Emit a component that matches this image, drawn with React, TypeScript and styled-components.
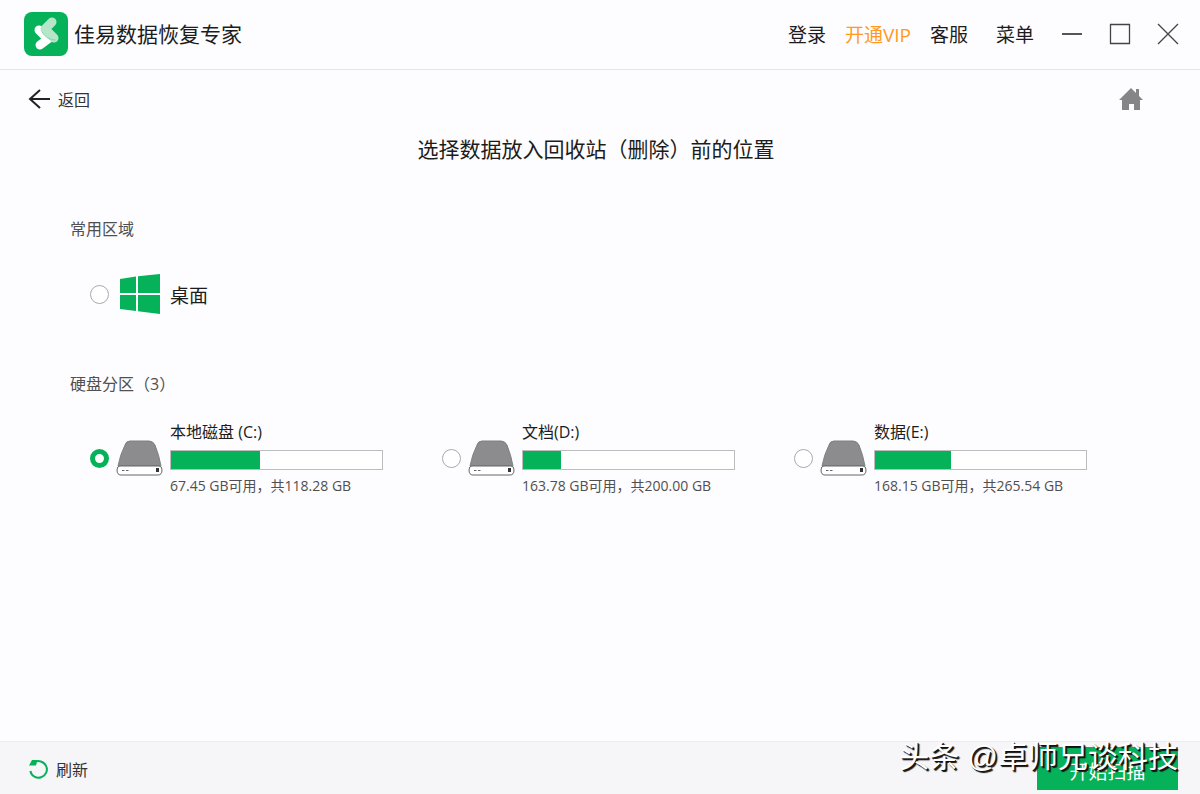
import React, { useState } from 'react';
import styled, { createGlobalStyle } from 'styled-components';

const GREEN = '#05b259';

const GlobalStyle = createGlobalStyle`
  *, *::before, *::after { box-sizing: border-box; }
  body {
    margin: 0;
    background: #fdfcfe;
    color: #1c1c1c;
    font-family: "Open Sans", "Noto Sans CJK SC", sans-serif;
    font-size: 16px;
    font-weight: 400;
  }
  button, input { font: inherit; color: inherit; margin: 0; }
`;

const Window = styled.div`
  min-height: 100vh;
  display: flex;
  flex-direction: column;
`;

const TitleBar = styled.header`
  display: flex;
  align-items: center;
  justify-content: space-between;
  height: 70px;
  padding: 0 20px 2px 24px;
  border-bottom: 1px solid #e6e5e8;
`;

const Brand = styled.div`
  display: flex;
  align-items: center;
  gap: 6px;
  font-size: 21px;
  line-height: 30px;
`;

const Menu = styled.nav`
  display: flex;
  align-items: center;
`;

const MenuLinks = styled.div`
  display: flex;
  gap: 19px;
  padding-top: 3px;
`;

const MenuLink = styled.a<{ $vip?: boolean; $spaced?: boolean }>`
  color: ${p => (p.$vip ? '#ff9a1f' : '#1c1c1c')};
  margin-left: ${p => (p.$spaced ? 9 : 0)}px;
  font-size: 19px;
  line-height: 28px;
  text-decoration: none;
`;

const WindowControls = styled.div`
  display: flex;
  gap: 24px;
  margin-left: 26px;
`;

const IconButton = styled.button`
  display: flex;
  align-items: center;
  justify-content: center;
  width: 24px;
  height: 24px;
  padding: 0;
  border: 0;
  background: none;
`;

const SubBar = styled.div`
  display: flex;
  align-items: center;
  justify-content: space-between;
  padding: 16px 57px 0 28px;
`;

const TextButton = styled.button`
  display: flex;
  align-items: center;
  gap: 7px;
  padding: 2px 0 0;
  border: 0;
  background: none;
  color: #333;
  line-height: 24px;
`;

const Main = styled.main`
  flex: 1;
`;

const Heading = styled.h1`
  margin: 21px 8px 0 0;
  font-size: 21px;
  font-weight: 400;
  line-height: 32px;
  text-align: center;
`;

const Section = styled.fieldset`
  margin: 0;
  padding: 52px 54px 0 70px;
  border: 0;
  min-width: 0;
`;

const SectionTitle = styled.h2`
  margin: 0;
  color: #505050;
  font-size: 16px;
  font-weight: 400;
  line-height: 24px;
`;

const Places = styled.div`
  display: flex;
  padding: 33px 0 6px 20px;
`;

const Disks = styled.div`
  display: grid;
  grid-template-columns: repeat(3, 1fr);
  padding: 24px 0 24px 20px;
`;

const Choice = styled.label`
  display: flex;
  align-items: center;
`;

const Radio = styled.input`
  appearance: none;
  flex: none;
  width: 19px;
  height: 19px;
  border: 1px solid #a9a9ab;
  border-radius: 50%;
  background: #fff;
  &:checked { border: 5px solid ${GREEN}; }
`;

const PlaceIcon = styled.span`
  display: flex;
  margin: 0 10px 0 11px;
`;

const PlaceName = styled.span`
  padding-top: 3px;
  font-size: 19px;
  line-height: 28px;
`;

const DiskIcon = styled.span`
  display: flex;
  flex: none;
  margin: 0 7px;
`;

const DiskInfo = styled.span`
  display: flex;
  flex-direction: column;
  width: 213px;
`;

const DiskName = styled.span`
  font-size: 16px;
  line-height: 24px;
`;

const Usage = styled.span`
  display: block;
  height: 20px;
  margin: 6px 0;
  border: 1px solid #bdbdc0;
  background: #fff;
`;

const UsageFill = styled.span`
  display: block;
  height: 100%;
  background: ${GREEN};
`;

const DiskStats = styled.span`
  color: #505050;
  font-size: 14px;
  line-height: 20px;
  white-space: nowrap;
`;

const BottomBar = styled.footer`
  position: relative;
  display: flex;
  align-items: center;
  justify-content: space-between;
  height: 53px;
  padding: 5px 22px 4px 28px;
  border-top: 1px solid #ececef;
  background: #f6f5f8;
`;

const ScanButton = styled.button`
  width: 141px;
  height: 43px;
  padding: 6px 0 0;
  border: 0;
  background: ${GREEN};
  color: #fff;
  font-size: 19px;
  line-height: 28px;
`;

const Watermark = styled.span`
  position: absolute;
  right: 22px;
  bottom: 17px;
  color: #fff;
  font-family: "Liberation Sans", "Noto Sans CJK SC", sans-serif;
  font-size: 30px;
  line-height: 40px;
  text-shadow: 2px 2px 1px #111, 1px 1px 0 #222;
  white-space: nowrap;
  pointer-events: none;
`;

const Logo = () => (
  <svg width="44" height="44" viewBox="0 0 44 44" fill="none" strokeLinecap="round" strokeLinejoin="round" aria-hidden="true">
    <rect width="44" height="44" rx="8" fill={GREEN} />
    <path d="M15 18L24 27L16 33" stroke="#fff" strokeWidth="9" />
    <path d="M28 10L21 17L30 26" stroke="#b5e6ca" strokeWidth="9" />
    <path d="M18 20Q23 28 31 28" stroke="#85d5a8" strokeWidth="1" />
  </svg>
);

const BackArrow = () => (
  <svg width="23" height="22" viewBox="0 0 23 22" fill="none" stroke="#222" strokeWidth="2" aria-hidden="true">
    <path d="M22 10H3M12 1L2 10l10 9" />
  </svg>
);

const HomeIcon = () => (
  <svg width="24" height="22" viewBox="0 0 24 22" fill="#858585" aria-hidden="true">
    <path d="M12 0L17 5V1h3v7l4 4h-3v10h-6v-6h-5v6H3V12H0z" />
  </svg>
);

const WindowsIcon = () => (
  <svg width="40" height="40" viewBox="0 0 40 40" fill={GREEN} aria-hidden="true">
    <path d="M0 5L16 2.5V19H0zM18 2.2L40 0V19H18zM0 21H16V37L0 35zM18 21H40V40L18 37.3z" />
  </svg>
);

const DriveIcon = () => (
  <svg width="47" height="36" viewBox="0 0 47 36" aria-hidden="true">
    <path d="M14 1h19q4 0 6 4q4 10 6 21H2Q4 15 9 5q1-4 5-4z" fill="#8c8b8d" stroke="#808080" />
    <path d="M4 26h39q3 0 3 4q0 5-4 5H5q-4 0-4-5q0-4 3-4z" fill="#fff" stroke="#666" />
    <path d="M6 30.5h2.500M10 30.5h2.500" stroke="#666" />
    <rect x="40" y="28" width="3" height="4" fill="#333" />
  </svg>
);

const RefreshIcon = () => (
  <svg width="21" height="22" viewBox="0 0 21 22" aria-hidden="true">
    <path d="M6 3.5A8.300 8.300 0 1 1 2.400 12" fill="none" stroke={GREEN} strokeWidth="2" />
    <path d="M1 6.500L4 1h5.500L8 6.500z" fill={GREEN} />
  </svg>
);

const disks = [
  { id: 'c', name: '本地磁盘 (C:)', free: '67.45', total: '118.28', used: 42 },
  { id: 'd', name: '文档(D:)', free: '163.78', total: '200.00', used: 18 },
  { id: 'e', name: '数据(E:)', free: '168.15', total: '265.54', used: 36 },
];

export default function App() {
  const [location, setLocation] = useState('c');

  return (
    <Window>
      <GlobalStyle />
      <TitleBar>
        <Brand>
          <Logo />
          佳易数据恢复专家
        </Brand>
        <Menu>
          <MenuLinks>
            <MenuLink href="#login">登录</MenuLink>
            <MenuLink href="#vip" $vip>开通VIP</MenuLink>
            <MenuLink href="#service">客服</MenuLink>
            <MenuLink href="#menu" $spaced>菜单</MenuLink>
          </MenuLinks>
          <WindowControls>
            <IconButton aria-label="最小化">
              <svg width="24" height="24" stroke="#555" strokeWidth="2"><path d="M2 12H22" /></svg>
            </IconButton>
            <IconButton aria-label="最大化">
              <svg width="24" height="24" fill="none" stroke="#444" strokeWidth="1.3"><path d="M2.5 2.5h19v19h-19z" /></svg>
            </IconButton>
            <IconButton aria-label="关闭">
              <svg width="24" height="24" stroke="#444" strokeWidth="1.3"><path d="M2 2L22 22M22 2L2 22" /></svg>
            </IconButton>
          </WindowControls>
        </Menu>
      </TitleBar>

      <Main>
        <SubBar>
          <TextButton><BackArrow />返回</TextButton>
          <IconButton aria-label="首页"><HomeIcon /></IconButton>
        </SubBar>
        <Heading>选择数据放入回收站（删除）前的位置</Heading>

        <Section>
          <SectionTitle>常用区域</SectionTitle>
          <Places>
            <Choice>
              <Radio type="radio" name="location" checked={location === 'desktop'} onChange={() => setLocation('desktop')} />
              <PlaceIcon><WindowsIcon /></PlaceIcon>
              <PlaceName>桌面</PlaceName>
            </Choice>
          </Places>
        </Section>

        <Section>
          <SectionTitle>硬盘分区（3）</SectionTitle>
          <Disks>
            {disks.map(d => (
              <Choice key={d.id}>
                <Radio type="radio" name="location" checked={location === d.id} onChange={() => setLocation(d.id)} />
                <DiskIcon><DriveIcon /></DiskIcon>
                <DiskInfo>
                  <DiskName>{d.name}</DiskName>
                  <Usage><UsageFill style={{ width: `${d.used}%` }} /></Usage>
                  <DiskStats>{d.free} GB可用，共{d.total} GB</DiskStats>
                </DiskInfo>
              </Choice>
            ))}
          </Disks>
        </Section>
      </Main>

      <BottomBar>
        <TextButton><RefreshIcon />刷新</TextButton>
        <ScanButton>开始扫描</ScanButton>
        <Watermark>头条 @卓师兄谈科技</Watermark>
      </BottomBar>
    </Window>
  );
}
